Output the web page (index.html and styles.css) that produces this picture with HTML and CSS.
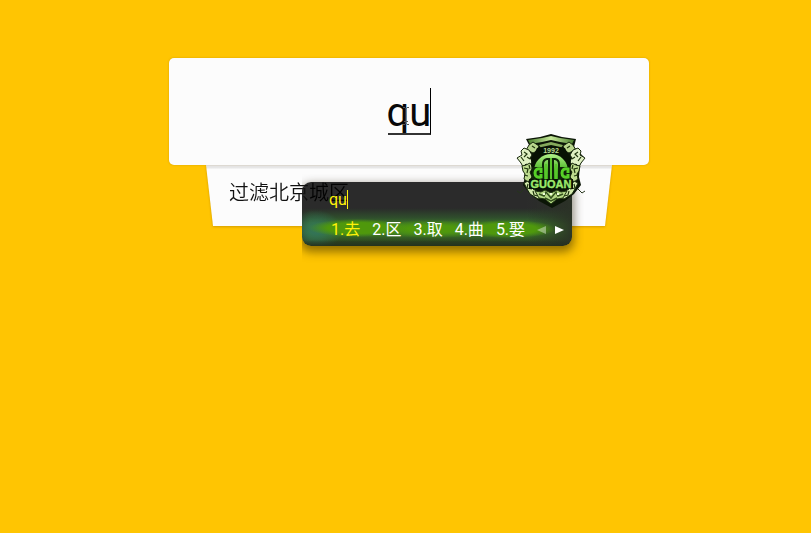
FILE: index.html
```html
<!DOCTYPE html>
<html lang="zh-CN">
<head>
<meta charset="utf-8">
<meta name="viewport" content="width=device-width, initial-scale=1">
<title>qu</title>
<link rel="stylesheet" href="styles.css">
</head>
<body>
<main class="page">
  <form class="search">
    <div class="field">
      <input class="query" type="text" value="qu" aria-label="qu" autocomplete="off">
      <span class="composition"></span>
      <svg class="pointer" viewBox="0 0 8 20" aria-hidden="true"><path d="M1 1.5h2l1 1 1-1h2M4 2v16M1 18.500h2l1-1 1 1h2M2 15.500h4"/></svg>
    </div>
    <div class="results">
      <div class="sheet"><p class="result">过滤北京城区</p></div>
    </div>
    <div class="ime">
      <div class="panel">
        <div class="typed">qu</div>
        <div class="candidates">
          <button type="button" class="candidate active">1.去</button>
          <button type="button" class="candidate">2.区</button>
          <button type="button" class="candidate">3.取</button>
          <button type="button" class="candidate">4.曲</button>
          <button type="button" class="candidate">5.娶</button>
          <button type="button" class="arrow dim" aria-label="◀"><svg viewBox="0 0 9 8"><path d="M9 0v8L0 4z"/></svg></button>
          <button type="button" class="arrow" aria-label="▶"><svg viewBox="0 0 9 8"><path d="M0 0v8l9-4z"/></svg></button>
        </div>
      </div>
      <svg class="crest" viewBox="0 0 70 74" role="img" aria-label="CITIC GUOAN 1992">
        <defs>
          <linearGradient id="ball" x1="0" y1="0" x2="0" y2="1"><stop offset="0" stop-color="#b2f08a"/><stop offset=".45" stop-color="#4fb82a"/><stop offset="1" stop-color="#249b09"/></linearGradient>
          <linearGradient id="band" x1="0" y1="0" x2="1" y2="0"><stop offset="0" stop-color="#4d8130"/><stop offset=".5" stop-color="#c4e799"/><stop offset="1" stop-color="#4d8130"/></linearGradient>
        </defs>
        <path d="M10 5L24 3 35 0l11 3 14 2-2 8 10 10-4 8-1 12 2 8-7 9-9 7-13 7-13-7-9-7-7-9 2-8-1-12-4-8 10-10z" fill="#0b1506"/>
        <path d="M12 6l14-2 9-2 9 2 14 2-2 4-12-2-9-2-9 2-12 2z" fill="url(#band)"/>
        <path d="M23 11l12-3 12 3-2 3-10-2-10 2z" fill="#85aa5c"/>
        <g id="beast" stroke="#17270c" stroke-width="1">
          <path d="M13 11l4-3 6 4-2 5-4 2-4-2-4 1z" fill="#b9d68d"/>
          <path d="M8 14l5 2 3 5-2 3 3 4-3 4-4-2-3 3-2-4-4-5 5-3-1-4z" fill="#dff0c2"/>
          <path d="M6 32l4-1 4-2 3 5-3 4 2 5-4 5-4-3 1-5-2-3z" fill="#bddb8f"/>
          <path d="M8 49l4-2 5 8 5 3 4 5-4 2-8-5-3-5z" fill="#d2e9ab"/>
        </g>
        <use href="#beast" transform="matrix(-1 0 0 1 70 0)"/>
        <g id="fur" fill="none" stroke="#21370e" stroke-width="1.200">
          <path d="M8 18l3 2-3 3M11 23l3 2M5 23l3 4M8 34l4 1-1 4M8 41l4 1M13 31l1 4M16 12l3 2M12 50l-1 4 5 1M17 57l1 4 4 1"/>
        </g>
        <use href="#fur" transform="matrix(-1 0 0 1 70 0)"/>
        <path d="M1 57l3 2 4-4M69 57l-3 2-4-4" fill="none" stroke="#26351c"/>
        <path d="M21 14l14-3 14 3 6 12-1 20H16l-1-20z" fill="#081204"/>
        <circle cx="35" cy="37" r="17" fill="url(#ball)"/>
        <path d="M16 33h10v14H16zM44 33h10v14H44z" fill="#102509"/>
        <path d="M27 46V30q0-4 4-5h2v21M37 46V25h2q4 1 4 5v16" fill="none" stroke="#102509" stroke-width="2"/>
        <path d="M25 39v-4q-6-1-6 4t6 4v-3M52 39v-4q-6-1-6 4t6 4v-3" fill="none" stroke="#56cf27" stroke-width="3"/>
        <path d="M30 30v16M35 24v22M40 30v16" stroke="#5ac52b" stroke-width="2"/>
        <path d="M13 45h44v10H13z" fill="#081204"/>
        <text x="35" y="19" class="year">1992</text>
        <text x="35" y="54" class="club">GUOAN</text>
        <path d="M19 57l6 1 4-2 6 3 6-3 4 2 6-1-4 7-6 1-6 5-6-5-6-1z" fill="#b5d985" stroke="#213611"/>
        <path d="M23 60l5 2 2-4 5 6 5-6 2 4 5-2M29 64l6 3 6-3" fill="none" stroke="#34511e" stroke-width="1.500"/>
        <path d="M27 60h2M34 60h2M41 60h2" stroke="#f0ffda" stroke-width="2"/>
      </svg>
    </div>
  </form>
</main>
</body>
</html>
```
FILE: styles.css
```css
* { box-sizing: border-box; }
body {
  margin: 0;
  min-height: 100vh;
  background: #ffc502;
  font-family: Roboto, "Noto Sans CJK SC", sans-serif;
}
.page { padding: 58px 16px 16px 23px; }
.search {
  position: relative;
  max-width: 480px;
  margin: 0 auto;
}
.field {
  position: relative;
  z-index: 1;
  display: grid;
  border-radius: 5px;
  background: #fcfcfc;
  box-shadow: 0 0 2px rgba(120, 80, 0, .35);
}
.query {
  width: 100%;
  padding: 31px 16px 28px;
  border: 0;
  outline: 0;
  background: none;
  color: #080808;
  font: 40px/48px Roboto, "Noto Sans CJK SC", sans-serif;
  text-align: center;
}
.composition {
  position: absolute;
  top: 30px;
  left: calc(50% - 21px);
  width: 43px;
  height: 47px;
  border-right: 1px solid #000;
  border-bottom: 2px solid #333;
}
.pointer {
  position: absolute;
  top: 48px;
  left: calc(50% - 7px);
  width: 8px;
  height: 20px;
  fill: none;
  stroke: #555;
}
.results {
  margin: 0 37px;
  filter: drop-shadow(0 1px 1px rgba(150, 100, 0, .4));
}
.sheet {
  padding: 13px 23px 20px;
  background: linear-gradient(#e7e7e7 3px, #fcfcfc 4px);
  clip-path: polygon(0 0, 100% 0, calc(100% - 7px) 100%, 7px 100%);
}
.result {
  margin: 0;
  color: #111;
  font: 350 20px/28px "Noto Sans CJK SC", sans-serif;
}
.ime {
  position: absolute;
  z-index: 2;
  top: 124px;
  left: 133px;
  width: 270px;
}
.panel {
  border-radius: 9px;
  background:
    linear-gradient(transparent 58px, rgba(35, 45, 30, .8) 64px),
    radial-gradient(ellipse 50px 9px at 56px 46px, #4f980c 60%, transparent),
    radial-gradient(ellipse 60px 9px at 130px 47px, #4f980c 40%, transparent),
    radial-gradient(ellipse 48px 9px at 206px 47px, #4f980c 60%, transparent),
    radial-gradient(ellipse 26px 20px at 14px 48px, rgba(50, 115, 90, .9) 20%, transparent),
    linear-gradient(90deg, rgba(43, 43, 43, .6), transparent 8px, transparent 225px, rgba(43, 50, 38, .9) 268px),
    linear-gradient(transparent 26px, rgba(50, 95, 45, .7) 36px, #3d7a28 43px, #3d7a28 51px, rgba(45, 75, 40, .8) 60px),
    rgba(0, 0, 0, .83);
  box-shadow: 0 4px 10px 2px rgba(40, 30, 0, .5);
  clip-path: inset(-8px -12px -18px 0);
}
.typed {
  width: 46px;
  padding: 8px 0 0 27px;
  color: #fff20a;
  font-size: 16px;
  line-height: 20px;
}
.typed::after {
  content: "";
  position: absolute;
  top: 8px;
  left: 45px;
  width: 1px;
  height: 19px;
  background: #fff20a;
}
.candidates {
  display: flex;
  align-items: center;
  gap: 12px;
  height: 36px;
  padding: 4px 0 0 29px;
}
.candidate, .arrow {
  flex: none;
  margin: 0;
  padding: 0;
  border: 0;
  background: none;
  color: #fff;
  font: 16px/20px Roboto, "Noto Sans CJK SC", sans-serif;
}
.active { color: #fff20a; }
.arrow {
  display: flex;
  width: 9px;
}
.arrow svg { width: 9px; height: 8px; fill: #fff; }
.arrow + .arrow { margin-left: -3px; }
.dim { opacity: .4; }
.crest {
  position: absolute;
  top: -48px;
  right: -14px;
  width: 70px;
  height: 74px;
}
.year, .club {
  font-family: "Liberation Sans", sans-serif;
  font-weight: 700;
  text-anchor: middle;
}
.year { font-size: 7px; fill: #b9dc92; }
.club { font-size: 11px; fill: #9be96b; stroke: #9be96b; stroke-width: .4px; }
```
